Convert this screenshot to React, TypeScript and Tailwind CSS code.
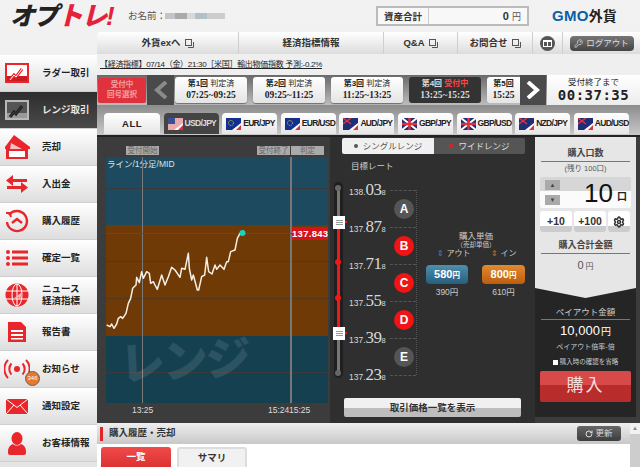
import React from 'react';
import { RotateCw, Settings, KeyRound } from 'lucide-react';

const SANS = "font-['Liberation_Sans','Noto_Sans_CJK_JP',sans-serif]";

function ExtIcon() {
  return (
    <svg width="9" height="9" viewBox="0 0 9 9" className="inline-block ml-1 text-[#555]">
      <rect x="0.5" y="0.5" width="6" height="6" fill="none" stroke="currentColor" />
      <path d="M8.5 3v5.5H3" fill="none" stroke="currentColor" />
    </svg>
  );
}

function MenuIcon({ name }: { name: string }) {
  const red = '#e8262c';
  if (name === 'ladder' || name === 'range') {
    const bg = name === 'ladder' ? red : '#b9b9b9';
    const ink = name === 'ladder' ? '#fff' : '#3a3a3a';
    return (
      <svg width="24" height="20" viewBox="0 0 24 20">
        <rect width="24" height="20" fill={bg} />
        <rect x="2" y="2" width="20" height="11" fill={name === 'ladder' ? '#fff' : '#555'} />
        <rect x="2" y="13" width="20" height="5" fill={name === 'ladder' ? '#c71c22' : '#999'} />
        <path d="M5 17l4-5 2 2 6-8" fill="none" stroke={name === 'ladder' ? red : '#222'} strokeWidth="3" />
        <path d="M5 17l4-5 2 2 6-8" fill="none" stroke={ink} strokeWidth="1" />
      </svg>
    );
  }
  if (name === 'sell') {
    return (
      <svg width="27" height="26" viewBox="0 0 27 26" fill={red}>
        <path d="M1 13L10 1l16 12v2H1z" />
        <path d="M7 9l11 6H6z" fill="#fff" opacity=".7" />
        <path d="M2 15h22v10H2z" />
        <path d="M5 17h16v6H5z" fill="#fff" />
      </svg>
    );
  }
  if (name === 'transfer') {
    return (
      <svg width="22" height="20" viewBox="0 0 22 20" fill={red}>
        <path d="M7 1v4h14v3H7v4L0 6.500z" />
        <path d="M15 8v4H1v3h14v4l7-5.500z" />
      </svg>
    );
  }
  if (name === 'history') {
    return (
      <svg width="24" height="24" viewBox="0 0 24 24" fill="none" stroke={red} strokeWidth="2.400">
        <path d="M4 6a10 10 0 1 1-2 7" />
        <path d="M1 4l4 0 1 4" strokeWidth="2" />
        <path d="M7 14l5-4 5 4" />
      </svg>
    );
  }
  if (name === 'list') {
    return (
      <svg width="22" height="16" viewBox="0 0 22 16" fill={red}>
        <circle cx="2" cy="2" r="2" /><rect x="6" y="0.500" width="16" height="3" />
        <circle cx="2" cy="8" r="2" /><rect x="6" y="6.500" width="16" height="3" />
        <circle cx="2" cy="14" r="2" /><rect x="6" y="12.500" width="16" height="3" />
      </svg>
    );
  }
  if (name === 'globe') {
    return (
      <svg width="24" height="24" viewBox="0 0 24 24">
        <circle cx="12" cy="12" r="11.500" fill={red} />
        <g fill="none" stroke="#fff" strokeWidth="1">
          <ellipse cx="12" cy="12" rx="5" ry="11" />
          <path d="M1 8h22M1 16h22M12 1v22" />
        </g>
        <path d="M8 16l9-7-2 8-2-3z" fill="#ffb3b3" />
      </svg>
    );
  }
  if (name === 'doc') {
    return (
      <svg width="18" height="20" viewBox="0 0 18 20" fill={red}>
        <path d="M0 0h13l5 5v15H0z" />
        <path d="M3 8h12v2H3zM3 12h12v2H3zM3 16h12v1.500H3z" fill="#fff" />
      </svg>
    );
  }
  if (name === 'signal') {
    return (
      <svg width="26" height="20" viewBox="0 0 26 20" fill="none" stroke={red} strokeWidth="2">
        <circle cx="13" cy="10" r="3" fill={red} stroke="none" />
        <path d="M7.500 4.500a8 8 0 0 0 0 11M18.500 4.500a8 8 0 0 1 0 11" />
        <path d="M4 1a13 13 0 0 0 0 18M22 1a13 13 0 0 1 0 18" />
      </svg>
    );
  }
  if (name === 'mail') {
    return (
      <svg width="22" height="15" viewBox="0 0 22 15">
        <rect width="22" height="15" fill={red} />
        <path d="M0 0l11 8.500L22 0M0 15l8-9M22 15l-8-9" fill="none" stroke="#fff" strokeWidth="1" />
      </svg>
    );
  }
  return (
    <svg width="18" height="23" viewBox="0 0 18 23" fill={red}>
      <ellipse cx="9" cy="6.500" rx="5.500" ry="6.500" />
      <path d="M5 12c-3 1-5 4-5 7v2c0 1 1 2 2 2h14c1 0 2-1 2-2v-2c0-3-2-6-5-7-2 2-6 2-8 0z" />
    </svg>
  );
}

const menu = [
  { key: 'ladder', label: ['ラダー取引'] },
  { key: 'range', label: ['レンジ取引'], active: true },
  { key: 'sell', label: ['売却'] },
  { key: 'transfer', label: ['入出金'] },
  { key: 'history', label: ['購入履歴'] },
  { key: 'list', label: ['確定一覧'] },
  { key: 'globe', label: ['ニュース', '経済指標'] },
  { key: 'doc', label: ['報告書'] },
  { key: 'signal', label: ['お知らせ'], badge: true },
  { key: 'mail', label: ['通知設定'] },
  { key: 'user', label: ['お客様情報'] },
];

function Sidebar() {
  return (
    <aside className="w-[97px] pt-[23px] shrink-0">
      {menu.map((m) => (
        <div
          key={m.key}
          className={
            'relative h-[37px] flex items-center border-b border-[#cfcfcf] ' +
            (m.active
              ? 'bg-gradient-to-b from-[#2e2e2e] to-[#4a4a4a] text-[#e8e8e8]'
              : 'bg-gradient-to-b from-white to-[#dedede] text-[#222]')
          }
        >
          <div className="w-[34px] flex justify-center shrink-0">
            <MenuIcon name={m.key} />
          </div>
          <div className="ml-[8px] text-[9.500px] leading-[12px] font-bold whitespace-nowrap">
            {m.label.map((l) => (
              <div key={l}>{l}</div>
            ))}
          </div>
          {m.badge && (
            <div className="absolute left-[25px] top-[20px] w-[15px] h-[15px] rounded-full bg-[#e8782a] border border-[#666] text-[6px] leading-[13px] text-center text-white">
              346
            </div>
          )}
        </div>
      ))}
    </aside>
  );
}

function Header() {
  return (
    <header className="h-[32px] flex items-center shrink-0 relative">
      <div className="w-[128px] pl-[10px] text-[25px] leading-[30px] font-black italic tracking-[-1.500px] whitespace-nowrap">
        <span className="text-[#222]">オプ</span>
        <span className="text-[#e6213a] text-[26px]">トレ!</span>
      </div>
      <span className="text-[9.500px] text-[#555] w-[37px] whitespace-nowrap">お名前：</span>
      <div className="w-[60px] h-[6px] flex blur-[0.5px]">
        <div className="w-[10px] bg-[#c4c4c4]" />
        <div className="w-[12px] bg-[#aaa]" />
        <div className="w-[8px] bg-[#d8d8d8]" />
        <div className="w-[12px] bg-[#b4c0c8]" />
        <div className="w-[18px] bg-[#ccc]" />
      </div>
      <div className="ml-[151px] w-[153px] h-[20px] border-2 border-[#bbb] bg-[#f8f8f8] flex items-center">
        <div className="w-[51px] h-full border-r border-[#ccc] text-center text-[9.500px] leading-[17px] font-bold text-[#333]">
          資産合計
        </div>
        <div className="flex-1 text-right pr-[6px] text-[11px] text-[#333]">
          <span className="font-bold">0</span> <span className="text-[9px] text-[#555]">円</span>
        </div>
      </div>
      <div className="ml-[23px] flex items-center whitespace-nowrap leading-[16px] font-bold">
        <span className="text-[#0b5fa5] text-[15px] tracking-[0.3px]">GMO</span>
        <span className="text-[#222] text-[14px]">外貨</span>
      </div>
    </header>
  );
}

function NavBar() {
  const cell = 'h-full flex items-center justify-center border-r border-[#cfcfcf] text-[9.500px] text-[#333] font-bold';
  return (
    <nav className="h-[22px] flex bg-gradient-to-b from-white to-[#dcdcdc] rounded-tl-[3px] shrink-0">
      <div className={cell + ' w-[142px]'}>外貨exへ<ExtIcon /></div>
      <div className={cell + ' w-[145px]'}>経済指標情報</div>
      <div className={cell + ' w-[74px]'}>Q&amp;A<ExtIcon /></div>
      <div className={cell + ' w-[75px]'}>お問合せ<ExtIcon /></div>
      <div className={cell + ' w-[30px]'}>
        <div className="w-[15px] h-[15px] rounded-full bg-[#555] flex items-center justify-center">
          <div className="w-[9px] h-[7px] border border-white border-t-2 flex justify-center">
            <div className="w-px h-full bg-white" />
          </div>
        </div>
      </div>
      <div className="flex-1 flex items-center justify-center">
        <div className="w-[64px] h-[15px] rounded-[4px] bg-gradient-to-b from-[#777] to-[#444] text-[#ddd] text-[8.500px] flex items-center justify-center gap-[3px]">
          <KeyRound size={9} />
          ログアウト
        </div>
      </div>
    </nav>
  );
}

function RoundCard({ title, state, time, active }: { title: string; state: string; time: string; active?: boolean }) {
  return (
    <div
      className={
        'w-[72px] h-[26px] shrink-0 rounded-[3px] text-center ' +
        (active
          ? 'bg-[#333] text-[#ddd]'
          : 'bg-gradient-to-b from-white to-[#e4e4e4] text-[#222] shadow-[0_1px_1px_rgba(0,0,0,.4)]')
      }
    >
      <div className="text-[8px] leading-[12px] mt-[1px] whitespace-nowrap">
        <span className="font-bold">{title}</span> <span className={active ? 'text-[#f44] font-bold' : ''}>{state}</span>
      </div>
      <div className="text-[9.500px] leading-[11px] whitespace-nowrap font-['Liberation_Serif',serif] font-bold">
        {time}
      </div>
    </div>
  );
}

function Chevron({ dir, color }: { dir: 'l' | 'r'; color: string }) {
  return (
    <svg width="14" height="18" viewBox="0 0 14 18" fill="none" stroke={color} strokeWidth="4">
      <path d={dir === 'l' ? 'M12 1L3 9l9 8' : 'M2 1l9 8-9 8'} />
    </svg>
  );
}

function RoundBar() {
  return (
    <div className="h-[30px] flex items-center bg-gradient-to-b from-[#6a6a6a] to-[#bdbdbd] shrink-0 overflow-hidden">
      <div className="ml-[1px] w-[48px] h-[25px] bg-[#e0323c] rounded-[2px] text-[#f4a0a0] text-[7.500px] leading-[10px] font-bold flex flex-col items-center justify-center shrink-0">
        <span>受付中</span>
        <span>回号選択</span>
      </div>
      <div className="ml-[1px] w-[27px] h-full bg-[#4a4a4a] flex items-center justify-center shrink-0">
        <Chevron dir="l" color="#8a8a8a" />
      </div>
      <div className="ml-[1px] w-[345px] flex gap-[6px] shrink-0">
        <RoundCard title="第1回" state="判定済" time="07:25~09:25" />
        <RoundCard title="第2回" state="判定済" time="09:25~11:25" />
        <RoundCard title="第3回" state="判定済" time="11:25~13:25" />
        <RoundCard title="第4回" state="受付中" time="13:25~15:25" active />
        <div className="w-[33px] h-[26px] shrink-0 rounded-l-[3px] bg-gradient-to-b from-white to-[#e4e4e4] text-[#222] text-center">
          <div className="text-[8px] leading-[12px] mt-[1px] font-bold">第5回</div>
          <div className="text-[9.500px] leading-[11px] font-['Liberation_Serif',serif] font-bold">15:25</div>
        </div>
      </div>
      <div className="w-[26px] h-full bg-[#4a4a4a] flex items-center justify-center shrink-0">
        <Chevron dir="r" color="#ffffff" />
      </div>
      <div className="ml-px flex-1 h-full bg-gradient-to-b from-white to-[#ececec] text-center text-[#222]">
        <div className="text-[8.500px] leading-[12px] mt-[1px]">受付終了まで</div>
        <div className="text-[14px] leading-[15px] font-bold font-['DejaVu_Sans_Mono',monospace] tracking-[0.5px]">00:37:35</div>
      </div>
    </div>
  );
}

function Flag({ kind, red }: { kind: string; red?: boolean }) {
  const base = kind === 'us' ? '#e9a9ad' : kind === 'eu' ? '#12308f' : '#1e2f78';
  return (
    <svg width="15" height="12" viewBox="0 0 15 12" className="shrink-0">
      <rect width="15" height="12" fill={base} />
      {kind === 'us' && <rect width="7" height="6" fill="#3b4f96" />}
      {kind === 'uk' && <path d="M0 0l15 12M15 0L0 12" stroke="#fff" strokeWidth="2" />}
      {kind === 'uk' && <path d="M7.500 0v12M0 6h15" stroke="#e0303c" strokeWidth="2.500" />}
      {kind === 'oc' && <path d="M0 0l8 6M8 0L0 6" stroke="#e0303c" strokeWidth="1.500" />}
      {kind === 'eu' && <circle cx="5" cy="5" r="2.500" fill="none" stroke="#e6c830" strokeWidth="1" strokeDasharray="1 1" />}
      {kind !== 'uk' && <path d="M15 5L6 12h9z" fill="#fff" />}
      {kind !== 'uk' && red && <path d="M15 7l-5 5h5z" fill="#e0303c" />}
    </svg>
  );
}

const pairs = [
  { name: 'USD/JPY', flag: 'us', active: true },
  { name: 'EUR/JPY', flag: 'eu' },
  { name: 'EUR/USD', flag: 'eu' },
  { name: 'AUD/JPY', flag: 'oc' },
  { name: 'GBP/JPY', flag: 'uk' },
  { name: 'GBP/USD', flag: 'uk' },
  { name: 'NZD/JPY', flag: 'oc' },
  { name: 'AUD/USD', flag: 'oc' },
];

function PairTabs() {
  return (
    <div className="h-[30px] flex items-end gap-[3.600px] pl-[7px] pb-[1px] bg-gradient-to-b from-[#8c8c8c] to-[#c9c9c9] shrink-0">
      <div className="w-[56px] h-[21px] rounded-t-[4px] bg-gradient-to-b from-white to-[#e6e6e6] text-[9.500px] font-bold text-[#222] text-center leading-[21px] tracking-[0.5px]">
        ALL
      </div>
      {pairs.map((p) => (
        <div
          key={p.name}
          className={
            'w-[55px] h-[21px] rounded-t-[4px] flex items-center gap-[2px] pl-[4px] whitespace-nowrap text-[8.500px] font-bold ' +
            (p.active ? 'bg-[#444] text-[#ddd]' : 'bg-gradient-to-b from-white to-[#e6e6e6] text-[#222]')
          }
        >
          <Flag kind={p.flag} red />
          <span className="w-[31px] tracking-[-0.7px]">{p.name}</span>
        </div>
      ))}
    </div>
  );
}

const line =
  '20,315 30,320 35,312 42,325 50,312 55,295 62,290 68,295 78,280 85,250 92,235 98,205 108,195 110,172 118,188 125,155 130,175 140,155 148,160 152,190 160,185 165,195 172,208 185,165 195,195 205,170 215,142 225,150 240,172 245,145 255,148 265,100 268,145 275,180 280,165 292,210 296,210 305,170 314,165 320,112 326,155 336,162 345,135 350,148 360,135 372,148 380,125 385,125 392,95 405,90 412,55 420,40 428,38';

function Chart() {
  const tag = 'h-[9px] bg-[#aaa] text-[#666] text-[7.500px] leading-[9px] text-center';
  return (
    <section className="w-[233px] shrink-0 pl-[9px]">
      <div className="h-[20px] flex items-end pb-[2px]">
        <div className={tag + ' ml-[20px] w-[33px]'}>受付開始</div>
        <div className={tag + ' ml-[98px] w-[33px]'}>受付終了</div>
        <div className={tag + ' ml-[1px] w-[33px]'}>判定</div>
      </div>
      <div className="relative w-[222px] h-[246px] flex flex-col overflow-hidden">
        <div className="h-[68px] bg-[#1d4a5e]" />
        <div className="h-[111px] bg-[#6f3a05]" />
        <div className="h-[67px] bg-[#15404f]" />

        <div className="absolute left-[1px] top-[2px] text-[8.500px] leading-[11px] text-[#dbe4e8]">ライン/1分足/MID</div>
        <div className="absolute left-0 right-0 top-[31px] h-px bg-[#3a3a3a]" />
        <div className="absolute left-0 right-0 top-[104px] h-px bg-[#54361a]" />
        <div className="absolute left-0 right-0 top-[141px] h-px bg-[#54361a]" />
        <div className="absolute left-0 right-0 top-[215px] h-px bg-[#3a3a3a]" />
        <div className="absolute top-0 bottom-0 left-[36px] w-px bg-[#7a7a7a]" />
        <div className="absolute top-0 bottom-0 left-[184px] w-[2px] bg-[#777]" />
        <div className="absolute left-0 right-0 top-[76px] h-px bg-[#b5231c]" />

        <div className="absolute left-[14px] top-[180px] text-[45px] leading-[50px] font-black text-white/10 whitespace-nowrap tracking-[-2px] -rotate-3">
          レンジ
        </div>

        <svg width="222" height="246" viewBox="0 0 222 246" className="absolute left-0 top-0">
          <g transform="translate(-6 63) scale(0.33333)">
            <polyline points={line} fill="none" stroke="#f5f0e6" strokeWidth="4.500" strokeLinejoin="round" />
          </g>
          <circle cx="136.500" cy="76" r="3" fill="#1fd0c0" />
        </svg>

        <div className="absolute left-[186px] right-0 top-[70px] h-[13px] bg-[#d4141c] text-white text-[9.500px] leading-[13px] text-center font-bold tracking-[0.3px]">
          137.843
        </div>
      </div>
      <div className="relative h-[14px] text-[8.500px] leading-[14px] text-[#ddd]">
        <span className="absolute left-[26px]">13:25</span>
        <span className="absolute left-[162px]">15:24</span>
        <span className="absolute left-[183px]">15:25</span>
      </div>
    </section>
  );
}

const prices = [
  ['138.', '03', '8'],
  ['137.', '87', '8'],
  ['137.', '71', '8'],
  ['137.', '55', '8'],
  ['137.', '39', '8'],
  ['137.', '23', '8'],
];

const zones = [
  { k: 'A', on: false },
  { k: 'B', on: true },
  { k: 'C', on: true },
  { k: 'D', on: true },
  { k: 'E', on: false },
];

function SliderHandle({ top }: { top: string }) {
  return (
    <div className={'absolute left-[2px] w-[12px] h-[13px] bg-white flex flex-col items-center justify-center gap-[1px] ' + top}>
      <div className="w-[7px] h-px bg-[#999]" />
      <div className="w-[7px] h-px bg-[#999]" />
      <div className="w-[7px] h-px bg-[#999]" />
      <div className="absolute left-[12px] top-[5px] w-[2px] h-[2px] bg-[#f01818]" />
    </div>
  );
}

function RangeSlider() {
  return (
    <div className="relative w-[18px] h-[196px] mt-[10px] shrink-0">
      <div className="absolute left-[3px] top-0 bottom-0 w-[9px] rounded-full bg-[#1f1f1f]" />
      <div className="absolute left-[6px] top-[5px] bottom-[5px] w-[3px] bg-[#777]" />
      <div className="absolute left-[6px] top-[41px] h-[111px] w-[3px] bg-[#f01818]" />
      <div className="absolute left-[4px] top-[3px] w-[6px] h-[6px] rounded-full bg-[#666]" />
      <div className="absolute left-[4px] top-[77px] w-[6px] h-[6px] rounded-full bg-[#f01818]" />
      <div className="absolute left-[4px] top-[113px] w-[6px] h-[6px] rounded-full bg-[#f01818]" />
      <div className="absolute left-[4px] top-[188px] w-[6px] h-[6px] rounded-full bg-[#666]" />
      <SliderHandle top="top-[34px]" />
      <SliderHandle top="top-[145px]" />
    </div>
  );
}

function RangePanel() {
  return (
    <section className="w-[205px] shrink-0 bg-[#2f2f2f] flex flex-col">
      <div className="mt-[1px] ml-[12px] w-[183px] h-[16px] rounded-[2px] flex text-[8.500px] leading-[16px] overflow-hidden shrink-0">
        <div className="w-[92px] bg-[#f0f0f0] text-[#555] text-center">
          <span className="inline-block w-[4px] h-[4px] rounded-full bg-[#555] mr-[5px] align-[1px]" />
          シングルレンジ
        </div>
        <div className="flex-1 bg-[#555] text-[#ddd] text-center">
          <span className="inline-block w-[4px] h-[4px] rounded-full bg-[#f01818] mr-[5px] align-[1px]" />
          ワイドレンジ
        </div>
      </div>
      <div className="ml-[21px] mt-[6px] text-[8.500px] leading-[12px] text-[#ccc] shrink-0">目標レート</div>

      <div className="flex ml-[1px] h-[222px] shrink-0">
        <RangeSlider />
        <div className="w-[38px] -mt-[1px] shrink-0">
          {prices.map((p) => (
            <div key={p[1]} className="h-[37px] flex items-baseline justify-start text-[#d8d8d8] leading-[37px] whitespace-nowrap">
              <span className="text-[8.500px]">{p[0]}</span>
              <span className="text-[17px] font-['Liberation_Serif',serif] tracking-[-0.5px]">{p[1]}</span>
              <span className="text-[7.500px]">{p[2]}</span>
            </div>
          ))}
        </div>
        <div className="mt-[18px] w-[27px] ml-[3px] h-[185px] border-r border-dotted border-[#555] shrink-0">
          {zones.map((z) => (
            <div key={z.k} className="h-[37px] border-t border-dashed border-[#555] flex items-center justify-center pl-[2px]">
              <div
                className={
                  'w-[20px] h-[20px] rounded-full text-white text-[12px] font-bold flex items-center justify-center ' +
                  (z.on ? 'bg-[#f01414]' : 'bg-[#555]')
                }
              >
                {z.k}
              </div>
            </div>
          ))}
          <div className="border-t border-dashed border-[#555]" />
        </div>
        <div className="ml-[9px] mt-[60px] w-[100px] text-center text-[#ccc] shrink-0">
          <div className="text-[8.500px] leading-[9px]">購入単価</div>
          <div className="text-[6.500px] leading-[8px]">（売却単価）</div>
          <div className="flex text-[8px] leading-[11px] -mt-[1px]">
            <div className="w-[56px]"><span className="text-[#3e8bb5]">⇕</span> アウト</div>
            <div className="flex-1"><span className="text-[#d9741a]">⇕</span> イン</div>
          </div>
          <div className="flex gap-[14px] mt-[6px]">
            <div className="w-[42px] h-[19px] rounded-[4px] bg-gradient-to-b from-[#4f8fae] to-[#255f7d] text-white text-[11px] leading-[19px] font-bold">
              580<span className="text-[7.500px]">円</span>
            </div>
            <div className="w-[43px] h-[19px] rounded-[4px] bg-gradient-to-b from-[#e08a2e] to-[#bd5d0c] text-white text-[11px] leading-[19px] font-bold">
              800<span className="text-[7.500px]">円</span>
            </div>
          </div>
          <div className="flex gap-[14px] mt-[2px] text-[8.500px] leading-[12px]">
            <div className="w-[42px]">390円</div>
            <div className="w-[43px]">610円</div>
          </div>
        </div>
      </div>

      <div className="ml-[14px] mt-[4px] w-[177px] h-[19px] rounded-[2px] bg-gradient-to-b from-[#f0f0f0] from-50% to-[#bdbdbd] to-50% text-center text-[9.500px] leading-[19px] font-bold text-[#333] shrink-0">
        取引価格一覧を表示
      </div>
    </section>
  );
}

function OrderPanel() {
  const btn = 'h-[21px] rounded-[3px] bg-gradient-to-b from-white from-70% to-[#ccc] to-70% text-[10.500px] font-bold text-[#333] flex items-center justify-center';
  return (
    <section className="w-[101px] h-[280px] shrink-0 bg-[#252525] flex flex-col relative">
      <div className="h-[161px] bg-[#e6e6e6] [clip-path:polygon(0_0,100%_0,100%_151px,50%_100%,0_151px)] px-[6px] pt-[10px] text-center shrink-0">
        <div className="text-[9px] leading-[13px] font-bold text-[#444] border-b border-[#777] pb-[1px]">購入口数</div>
        <div className="text-[7.500px] leading-[14px] text-[#555]">(残り 100口)</div>
        <div className="relative h-[31px] flex items-center justify-end pr-[4px] bg-gradient-to-b from-[#d6d6d6] from-45% to-[#fbfbfb] to-45% -mx-[1px] rounded-[2px] mt-[1px]">
          <div className="absolute left-[5px] top-[3px] w-[15px] h-[10px] bg-[#aaa] text-[#444] text-[6px] leading-[10px]">▲</div>
          <div className="absolute left-[5px] top-[18px] w-[15px] h-[10px] bg-[#aaa] text-[#444] text-[6px] leading-[10px]">▼</div>
          <span className="text-[26px] leading-[28px] text-[#111]">10</span>
          <span className="text-[10px] font-bold ml-[4px] mt-[7px] text-[#222]">口</span>
        </div>
        <div className="flex gap-[2px] mt-[3px] -mx-[1px]">
          <div className={btn + ' w-[32px]'}>+10</div>
          <div className={btn + ' w-[32px]'}>+100</div>
          <div className={btn + ' w-[22px]'}><Settings size={12} strokeWidth={3} /></div>
        </div>
        <div className="mt-[7px] text-[9px] leading-[13px] font-bold text-[#444] border-b border-[#777] pb-[1px]">購入合計金額</div>
        <div className="mt-[3px] text-[11px] leading-[16px] text-[#555]">0<span className="text-[8px] ml-[2px]">円</span></div>
      </div>
      <div className="px-[6px] text-center">
        <div className="mt-[8px] text-[8.500px] leading-[12px] text-[#ccc] border-b border-[#777] pb-[1px]">ペイアウト金額</div>
        <div className="mt-[2px] text-[13px] leading-[17px] text-white">10,000<span className="text-[10px] ml-[1px]">円</span></div>
        <div className="mt-[1px] text-[7px] leading-[11px] text-[#ccc]">ペイアウト倍率-倍</div>
        <div className="mt-[5px] flex items-center justify-center gap-[2px] text-[6.500px] leading-[10px] text-[#ccc] whitespace-nowrap">
          <span className="w-[5px] h-[5px] bg-white" />
          購入時の確認を省略
        </div>
      </div>
      <div className="mx-[5px] mt-[4px] h-[31px] rounded-[2px] bg-gradient-to-b from-[#d84a4a] from-45% to-[#b92c2c] to-45% text-[#f5dede] text-[17px] leading-[30px] text-center tracking-[2px]">
        購入
      </div>
    </section>
  );
}

function BottomPane() {
  return (
    <div className="relative flex-1 bg-white overflow-hidden">
      <div className="h-[21px] flex items-center bg-gradient-to-b from-[#eee] to-[#c8c8c8]">
        <div className="ml-[3px] w-[3px] h-[14px] bg-[#e0242c]" />
        <span className="ml-[6px] text-[9.500px] font-bold text-[#333]">購入履歴・売却</span>
        <div className="ml-auto mr-[19px] w-[44px] h-[15px] rounded-[3px] bg-gradient-to-b from-[#666] to-[#3d3d3d] text-[#ddd] text-[8.500px] flex items-center justify-center gap-[2px]">
          <RotateCw size={8} strokeWidth={3} />
          更新
        </div>
      </div>
      <div className="flex gap-[6px] pl-[4px] pt-[3px]">
        <div className="w-[70px] h-[24px] rounded-t-[3px] bg-gradient-to-b from-[#f04a4a] to-[#d82c2c] text-white text-[9.500px] leading-[20px] font-bold text-center">一覧</div>
        <div className="w-[70px] h-[24px] rounded-t-[3px] bg-[#f1f1f1] border-2 border-[#ddd] text-[#333] text-[9.500px] leading-[17px] font-bold text-center">サマリ</div>
      </div>
      <div className="absolute right-0 top-0 bottom-0 w-[10px] bg-[#f2f2f2] flex flex-col items-center">
        <span className="text-[6px] leading-[11px] text-[#888]">▲</span>
        <div className="w-full flex-1 bg-[#cdcdcd]" />
      </div>
    </div>
  );
}

export default function App() {
  return (
    <div className={'w-[640px] h-[467px] overflow-hidden flex flex-col bg-gradient-to-b from-[#f2f2f2] to-[#e4e4e4] ' + SANS}>
      <Header />
      <div className="flex flex-1 min-h-0">
        <Sidebar />
        <main className="flex-1 min-w-0 flex flex-col">
          <NavBar />
          <div className="h-[21px] flex items-center pl-[3px] text-[8px] tracking-[-0.3px] text-[#222] underline bg-[#efefef] whitespace-nowrap shrink-0">
            【経済指標】07/14（金）21:30［米国］輸出物価指数 予測:-0.2%
          </div>
          <RoundBar />
          <PairTabs />
          <div className="h-[288px] flex bg-[#3c3c3c] border-t-2 border-[#222] shrink-0">
            <Chart />
            <RangePanel />
            <OrderPanel />
          </div>
          <BottomPane />
        </main>
      </div>
    </div>
  );
}
